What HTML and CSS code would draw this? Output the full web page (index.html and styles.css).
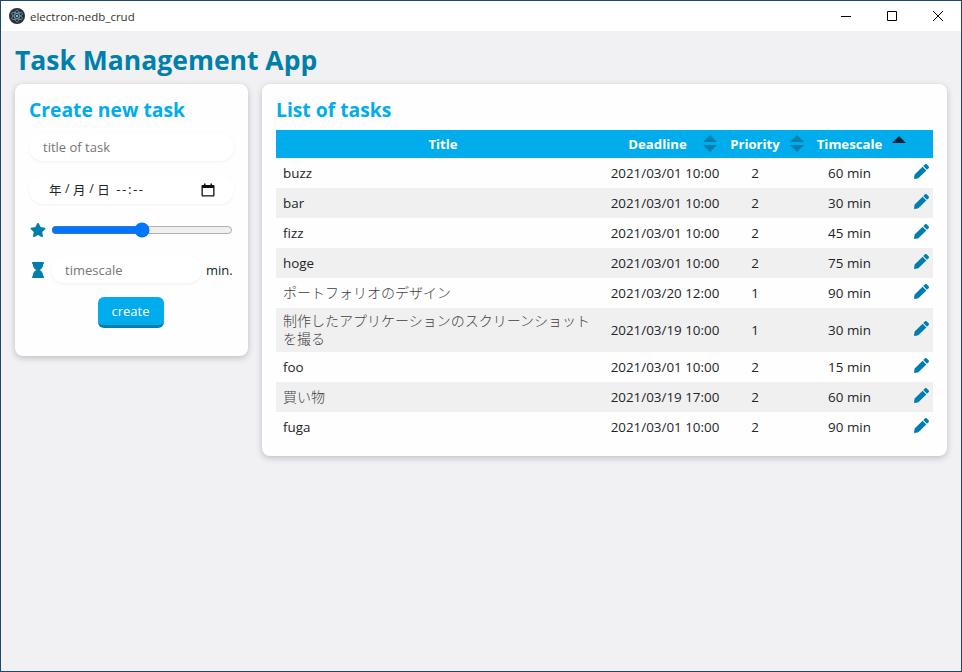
FILE: index.html
```html
<!DOCTYPE html>
<html lang="ja">
<head>
<meta charset="utf-8">
<title>electron-nedb_crud</title>
<link rel="stylesheet" href="styles.css">
</head>
<body>
<div class="window">
  <header class="titlebar">
    <svg class="applogo" viewBox="0 0 16 16" aria-hidden="true">
      <circle cx="8" cy="8" r="8" fill="#2b2f3b"/>
      <g fill="none" stroke="#7fb8c6" stroke-width=".6">
        <ellipse cx="8" cy="8" rx="6" ry="2.4" transform="rotate(30 8 8)"/>
        <ellipse cx="8" cy="8" rx="6" ry="2.4" transform="rotate(90 8 8)"/>
        <ellipse cx="8" cy="8" rx="6" ry="2.4" transform="rotate(150 8 8)"/>
      </g>
      <circle cx="8" cy="8" r="1" fill="#9feaf9"/>
    </svg>
    <span class="apptitle">electron-nedb_crud</span>
    <div class="winbtns">
      <span class="winbtn"><svg viewBox="0 0 10 10"><path d="M0 5.500h10" stroke="#000" fill="none"/></svg></span>
      <span class="winbtn"><svg viewBox="0 0 10 10"><path d="M.5.5h9v9h-9z" stroke="#000" fill="none"/></svg></span>
      <span class="winbtn"><svg viewBox="0 0 10 10"><path d="M0 0l10 10M10 0L0 10" stroke="#000" fill="none"/></svg></span>
    </div>
  </header>
  <main class="app">
    <h1 class="apphead">Task Management App</h1>
    <div class="columns">
      <section class="card card-form">
        <h2 class="cardhead">Create new task</h2>
        <div class="field"><input class="pill pill-title" type="text" placeholder="title of task"></div>
        <div class="field pill datepill">
          <span class="dateparts"><span>&#24180;</span><span>/</span><span>&#26376;</span><span>/</span><span>&#26085;</span><span class="datetime">--:--</span></span>
          <svg class="calicon" viewBox="0 0 14 14" aria-hidden="true"><path d="M1.500 2h11a1 1 0 0 1 1 1v9.500a1 1 0 0 1-1 1h-11a1 1 0 0 1-1-1V3a1 1 0 0 1 1-1zM1.800 5v7.200h10.400V5z" fill="#111" fill-rule="evenodd"/><path d="M3 .5h1.500v2H3zM9.500.5H11v2H9.500z" fill="#111"/></svg>
        </div>
        <div class="row row-slider">
          <svg class="ricon star" viewBox="0 0 576 512" aria-hidden="true"><path d="M259.300 17.800L194 150.200 47.900 171.500c-26.200 3.800-36.700 36.100-17.700 54.600l105.700 103-25 145.500c-4.500 26.300 23.200 46 46.400 33.700L288 439.600l130.700 68.700c23.200 12.200 50.900-7.400 46.400-33.700l-25-145.500 105.700-103c19-18.500 8.500-50.800-17.700-54.600L382 150.200 316.700 17.800c-11.700-23.600-45.600-23.900-57.400 0z"/></svg>
          <input class="slider" type="range" min="0" max="100" value="50">
        </div>
        <div class="row row-time">
          <svg class="ricon hourglass" viewBox="0 0 384 512" aria-hidden="true"><path d="M360 64c13.300 0 24-10.700 24-24V24c0-13.300-10.700-24-24-24H24C10.700 0 0 10.700 0 24v16c0 13.300 10.700 24 24 24 0 91 51 167.800 120.800 192C75 280.200 24 357 24 448c-13.300 0-24 10.700-24 24v16c0 13.300 10.700 24 24 24h336c13.300 0 24-10.700 24-24v-16c0-13.300-10.700-24-24-24 0-91-51-167.800-120.800-192C309 231.800 360 155 360 64z"/></svg>
          <input class="pill pill-time" type="text" placeholder="timescale">
          <span class="unit">min.</span>
        </div>
        <div class="actions"><button class="btn" type="button">create</button></div>
      </section>
      <section class="card card-list">
        <h2 class="cardhead">List of tasks</h2>
        <table class="tasks">
          <colgroup>
            <col class="c-title"><col class="c-deadline"><col class="c-priority"><col class="c-time"><col class="c-edit">
          </colgroup>
          <thead>
            <tr>
              <th class="th-title">Title</th>
              <th class="th-deadline">Deadline<span class="sort sort-d"><i class="up"></i><i class="down"></i></span></th>
              <th>Priority<span class="sort sort-p"><i class="up"></i><i class="down"></i></span></th>
              <th class="th-time">Timescale<span class="sort sort-t"><i class="up active"></i></span></th>
              <th></th>
            </tr>
          </thead>
          <tbody>
            <tr><td>buzz</td><td class="ctr">2021/03/01 10:00</td><td class="ctr">2</td><td class="ctr t">60 min</td><td class="ctr"><svg class="pen" viewBox="0 0 512 512"><use href="#pencil"/></svg></td></tr>
            <tr><td>bar</td><td class="ctr">2021/03/01 10:00</td><td class="ctr">2</td><td class="ctr t">30 min</td><td class="ctr"><svg class="pen" viewBox="0 0 512 512"><use href="#pencil"/></svg></td></tr>
            <tr><td>fizz</td><td class="ctr">2021/03/01 10:00</td><td class="ctr">2</td><td class="ctr t">45 min</td><td class="ctr"><svg class="pen" viewBox="0 0 512 512"><use href="#pencil"/></svg></td></tr>
            <tr><td>hoge</td><td class="ctr">2021/03/01 10:00</td><td class="ctr">2</td><td class="ctr t">75 min</td><td class="ctr"><svg class="pen" viewBox="0 0 512 512"><use href="#pencil"/></svg></td></tr>
            <tr><td class="ja">ポートフォリオのデザイン</td><td class="ctr">2021/03/20 12:00</td><td class="ctr">1</td><td class="ctr t">90 min</td><td class="ctr"><svg class="pen" viewBox="0 0 512 512"><use href="#pencil"/></svg></td></tr>
            <tr><td class="ja">制作したアプリケーションのスクリーンショットを撮る</td><td class="ctr">2021/03/19 10:00</td><td class="ctr">1</td><td class="ctr t">30 min</td><td class="ctr"><svg class="pen" viewBox="0 0 512 512"><use href="#pencil"/></svg></td></tr>
            <tr><td>foo</td><td class="ctr">2021/03/01 10:00</td><td class="ctr">2</td><td class="ctr t">15 min</td><td class="ctr"><svg class="pen" viewBox="0 0 512 512"><use href="#pencil"/></svg></td></tr>
            <tr><td class="ja">買い物</td><td class="ctr">2021/03/19 17:00</td><td class="ctr">2</td><td class="ctr t">60 min</td><td class="ctr"><svg class="pen" viewBox="0 0 512 512"><use href="#pencil"/></svg></td></tr>
            <tr><td>fuga</td><td class="ctr">2021/03/01 10:00</td><td class="ctr">2</td><td class="ctr t">90 min</td><td class="ctr"><svg class="pen" viewBox="0 0 512 512"><use href="#pencil"/></svg></td></tr>
          </tbody>
        </table>
      </section>
    </div>
  </main>
</div>
<svg class="defs" aria-hidden="true"><defs><path id="pencil" d="M497.900 142.100l-46.100 46.100c-4.700 4.700-12.300 4.700-17 0l-111-111c-4.700-4.700-4.700-12.300 0-17l46.100-46.100c18.700-18.700 49.100-18.700 67.900 0l60.100 60.100c18.800 18.700 18.800 49.100 0 67.900zM284.200 99.800L21.600 362.400.4 483.900c-2.900 16.400 11.400 30.600 27.800 27.800l121.500-21.300 262.600-262.600c4.700-4.700 4.700-12.300 0-17l-111-111c-4.800-4.700-12.400-4.700-17.100 0z"/></defs></svg>
</body>
</html>
```
FILE: styles.css
```css
* { box-sizing: border-box; }
html, body { margin: 0; height: 100%; }
body {
  font-family: "Open Sans", "Noto Sans CJK JP", sans-serif;
  font-size: 13.400px;
  color: #212529;
  background: #f1f0f3;
  overflow: hidden;
}
.defs { display: none; }
.window {
  height: 672px;
  border: 1px solid #1a4a68;
  display: flex;
  flex-direction: column;
}
.titlebar {
  height: 30px;
  background: #fff;
  display: flex;
  align-items: center;
  padding-left: 8px;
  flex: none;
}
.applogo { width: 16px; height: 16px; margin-right: 5px; }
.apptitle { font-size: 11.500px; color: #333; }
.winbtns { margin-left: auto; display: flex; }
.winbtn { width: 46px; height: 30px; display: flex; align-items: center; justify-content: center; }
.winbtn svg { width: 10px; height: 10px; }
.app { padding: 0 14px; flex: 1; }
.apphead {
  margin: 13px 0 7px;
  font-size: 26.500px;
  line-height: 33px;
  font-weight: 700;
  color: #007fad;
}
.columns { display: flex; gap: 14px; align-items: flex-start; }
.card {
  background: #fdfefd;
  border-radius: 8px;
  box-shadow: 0 2px 6px rgba(60, 60, 80, .28);
  padding: 14px;
}
.card-form { width: 233px; height: 272px; flex: none; }
.card-list { width: 685px; height: 372px; flex: none; }
.cardhead {
  margin: 0 0 8px;
  font-size: 19.300px;
  line-height: 24px;
  font-weight: 700;
  color: #00acec;
}
.card-form .cardhead { margin-bottom: 11px; }
.pill {
  border: 0;
  outline: 0;
  border-radius: 15px;
  background: #fff;
  box-shadow: 0 1px 3px rgba(0, 0, 0, .06);
  font: inherit;
  font-size: 13px;
  color: #212529;
  height: 29px;
  width: 100%;
  padding: 0 14px;
  display: block;
}
.pill-title { height: 28px; }
.pill::placeholder { color: #757575; opacity: 1; }
.field { margin-bottom: 14px; }
.datepill { display: flex; align-items: center; padding: 0 19px 0 20px; justify-content: space-between; }
.dateparts { display: flex; gap: 3.500px; font-size: 12.500px; }
.datetime { margin-left: 3px; font-size: 13.500px; letter-spacing: 1.500px; }
.calicon { width: 14px; height: 14px; }
.row { display: flex; align-items: center; }
.ricon { width: 16px; height: 16px; fill: #007fad; flex: none; }
.star { margin-left: 1px; }
.row-slider { height: 20px; margin-top: 16px; margin-bottom: 16px; gap: 5px; }
.slider { width: 182px; margin: 0; flex: none; }
.hourglass { width: 12px; margin-left: 3px; margin-right: 7px; }
.row-time { height: 27px; margin-bottom: 14px; }
.pill-time { width: 151px; height: 27px; }
.unit { margin-left: 4px; font-size: 13px; }
.actions { display: flex; justify-content: center; }
.btn {
  width: 66px;
  height: 31px;
  border: 0;
  border-bottom: 3px solid #007fad;
  border-radius: 6px;
  background: #00acec;
  color: #fff;
  font: inherit;
  font-size: 13px;
  padding: 0;
  margin-left: -2px;
}
.tasks { width: 657px; border-collapse: collapse; table-layout: fixed; }
.c-title { width: 328px; }
.c-deadline { width: 122px; }
.c-priority { width: 58px; }
.c-time { width: 125px; }
.c-edit { width: 24px; }
.tasks thead tr { background: #00acec; }
.tasks th {
  height: 28px;
  padding: 0;
  color: #fff;
  font-size: 13.200px;
  font-weight: 700;
  position: relative;
  text-align: center;
  white-space: nowrap;
}
.th-title { padding-left: 6px !important; }
.th-deadline { padding-right: 15px !important; }
.th-time { padding-left: 6px !important; padding-right: 0 !important; }
.tasks td { height: 30px; padding: 4px 7px; line-height: 18px; }
.tasks td.ja { font-size: 14px; color: #3c4146; font-weight: 300; }
.tasks td.ctr { text-align: center; padding-left: 0; padding-right: 0; }
.tasks td.t { padding-left: 6px; }
.tasks tbody tr:nth-child(even) { background: #f0f0f0; }
.pen { width: 15px; height: 15px; fill: #007fad; display: block; margin: -4px auto 0; }
.sort { position: absolute; top: 5px; width: 14px; height: 18px; }
.sort-d { left: 99px; }
.sort-p { left: 64px; }
.sort-t { left: 108px; top: 6px; }
.sort i { position: absolute; left: 0; width: 0; height: 0; border-left: 7px solid transparent; border-right: 7px solid transparent; }
.sort .up { top: 0; border-bottom: 7px solid #0a7fab; }
.sort .down { top: 10px; border-top: 7px solid #0a7fab; }
.sort .up.active { border-bottom-color: #02273a; }
```
